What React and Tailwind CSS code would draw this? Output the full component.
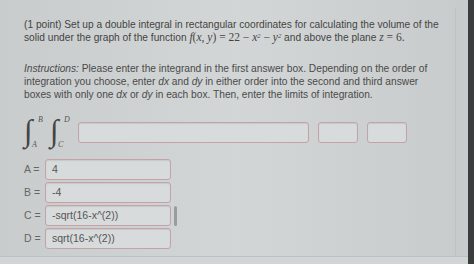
import React from 'react';

const serif = { fontFamily: '"Liberation Serif", "DejaVu Serif", serif' };

const Field = ({ value, className = '' }) => (
  <div
    className={`h-[21px] rounded-[3px] border border-[#c4a2a6] bg-[#d8dbdb] shadow-[inset_0_1px_1px_rgba(0,0,0,0.08)] flex items-center px-[6px] text-[10.5px] text-[#555] ${className}`}
  >
    {value}
  </div>
);

const Integral = ({ upper, lower }) => (
  <div className="relative w-[26px] h-[36px] text-[#444]" style={serif}>
    <span className="absolute left-0 top-[-1px] text-[31px] leading-[36px] italic">∫</span>
    <span className="absolute left-[14px] top-[0px] text-[8px] italic text-[#555]">{upper}</span>
    <span className="absolute left-[8px] bottom-[-1px] text-[8px] italic text-[#555]">{lower}</span>
  </div>
);

const Limit = ({ label, value, scroll }) => (
  <div className="flex items-center">
    <span className="w-[21px] whitespace-nowrap text-[10.5px] text-[#666]">{label}</span>
    <Field value={value} className="w-[126px]" />
    {scroll && <div className="ml-[3px] w-[3px] h-[20px] bg-[#9a9d9e] rounded-sm" />}
  </div>
);

export default function App() {
  return (
    <div
      className="w-[474px] h-[264px] flex bg-gradient-to-r from-[#c9cccd] via-[#d3d6d6] to-[#c8cbcb] overflow-hidden"
      style={{ fontFamily: '"Liberation Sans", Arial, sans-serif' }}
    >
      <div className="flex-1 flex flex-col">
        <div className="flex-1 mt-[8px] mr-[12px] border-r border-[#bfc2c2] pl-[24px] pt-[10px] text-[#444]">
          <p className="text-[10.2px] leading-[13px] whitespace-nowrap">
            (1 point) Set up a double integral in rectangular coordinates for calculating the volume of the
            <br />
            solid under the graph of the function{' '}
            <span className="text-[11.5px] italic" style={serif}>
              f<span className="not-italic">(</span>x<span className="not-italic">, </span>y
              <span className="not-italic">) = 22 − </span>x<sup className="text-[6.5px]">2</sup>
              <span className="not-italic"> − </span>y<sup className="text-[6.5px]">2</sup>
            </span>{' '}
            and above the plane{' '}
            <span className="text-[11.5px]" style={serif}>
              <i>z</i> = 6.
            </span>
          </p>

          <p className="mt-[18px] text-[10.2px] leading-[13px] text-[#4a4a4a] whitespace-nowrap">
            <i>Instructions:</i> Please enter the integrand in the first answer box. Depending on the order of
            <br />
            integration you choose, enter <i>dx</i> and <i>dy</i> in either order into the second and third answer
            <br />
            boxes with only one <i>dx</i> or <i>dy</i> in each box. Then, enter the limits of integration.
          </p>

          <div className="mt-[13px] flex items-center">
            <Integral upper="B" lower="A" />
            <Integral upper="D" lower="C" />
            <Field value="" className="ml-[2px] w-[231px] h-[21px]" />
            <Field value="" className="ml-[9px] w-[40px]" />
            <Field value="" className="ml-[9px] w-[40px]" />
          </div>

          <div className="mt-[9px] flex flex-col gap-[2px]">
            <Limit label="A =" value="4" />
            <Limit label="B =" value="-4" />
            <Limit label="C =" value="-sqrt(16-x^(2))" scroll />
            <Limit label="D =" value="sqrt(16-x^(2))" />
          </div>
        </div>
        <div className="h-[8px] border-t border-[#bdc0c0] bg-[#d2d5d5]" />
      </div>
      <div className="w-[6px] bg-[#3b3c3e]" />
    </div>
  );
}
